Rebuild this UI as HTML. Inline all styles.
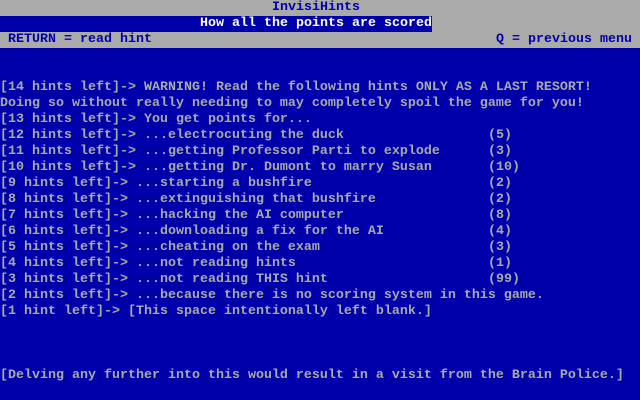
<!DOCTYPE html>
<html><head><style>
body{margin:0;width:640px;height:400px;background:#0000aa;overflow:hidden;position:relative;font-family:"Liberation Mono",monospace;font-size:13.33px;font-weight:bold;color:#aaaaaa}
.r{position:absolute;left:0;height:16px;line-height:16px;white-space:pre}
.s{position:absolute;left:488px;top:0}
</style></head><body>
<div class="r" style="top:0;width:640px;background:#aaaaaa;color:#0000aa"><span style="position:absolute;left:272px">InvisiHints</span></div>
<div class="r" style="top:16px;width:640px;background:#aaaaaa"></div>
<div class="r" style="top:16px;width:432px;background:#0000aa;color:#fff"><span style="position:absolute;left:200px">How all the points are scored</span></div>
<div class="r" style="top:32px;width:640px;background:#aaaaaa;color:#0000aa"><span style="position:absolute;left:8px">RETURN = read hint</span><span style="position:absolute;left:496px">Q = previous menu</span></div>
<div class="r" style="top:80px">[14 hints left]-> WARNING! Read the following hints ONLY AS A LAST RESORT!</div>
<div class="r" style="top:96px">Doing so without really needing to may completely spoil the game for you!</div>
<div class="r" style="top:112px">[13 hints left]-> You get points for...</div>
<div class="r" style="top:128px;width:640px">[12 hints left]-> ...electrocuting the duck<span class="s">(5)</span></div>
<div class="r" style="top:144px;width:640px">[11 hints left]-> ...getting Professor Parti to explode<span class="s">(3)</span></div>
<div class="r" style="top:160px;width:640px">[10 hints left]-> ...getting Dr. Dumont to marry Susan<span class="s">(10)</span></div>
<div class="r" style="top:176px;width:640px">[9 hints left]-> ...starting a bushfire<span class="s">(2)</span></div>
<div class="r" style="top:192px;width:640px">[8 hints left]-> ...extinguishing that bushfire<span class="s">(2)</span></div>
<div class="r" style="top:208px;width:640px">[7 hints left]-> ...hacking the AI computer<span class="s">(8)</span></div>
<div class="r" style="top:224px;width:640px">[6 hints left]-> ...downloading a fix for the AI<span class="s">(4)</span></div>
<div class="r" style="top:240px;width:640px">[5 hints left]-> ...cheating on the exam<span class="s">(3)</span></div>
<div class="r" style="top:256px;width:640px">[4 hints left]-> ...not reading hints<span class="s">(1)</span></div>
<div class="r" style="top:272px;width:640px">[3 hints left]-> ...not reading THIS hint<span class="s">(99)</span></div>
<div class="r" style="top:288px">[2 hints left]-> ...because there is no scoring system in this game.</div>
<div class="r" style="top:304px">[1 hint left]-> [This space intentionally left blank.]</div>
<div class="r" style="top:368px">[Delving any further into this would result in a visit from the Brain Police.]</div>
</body></html>
